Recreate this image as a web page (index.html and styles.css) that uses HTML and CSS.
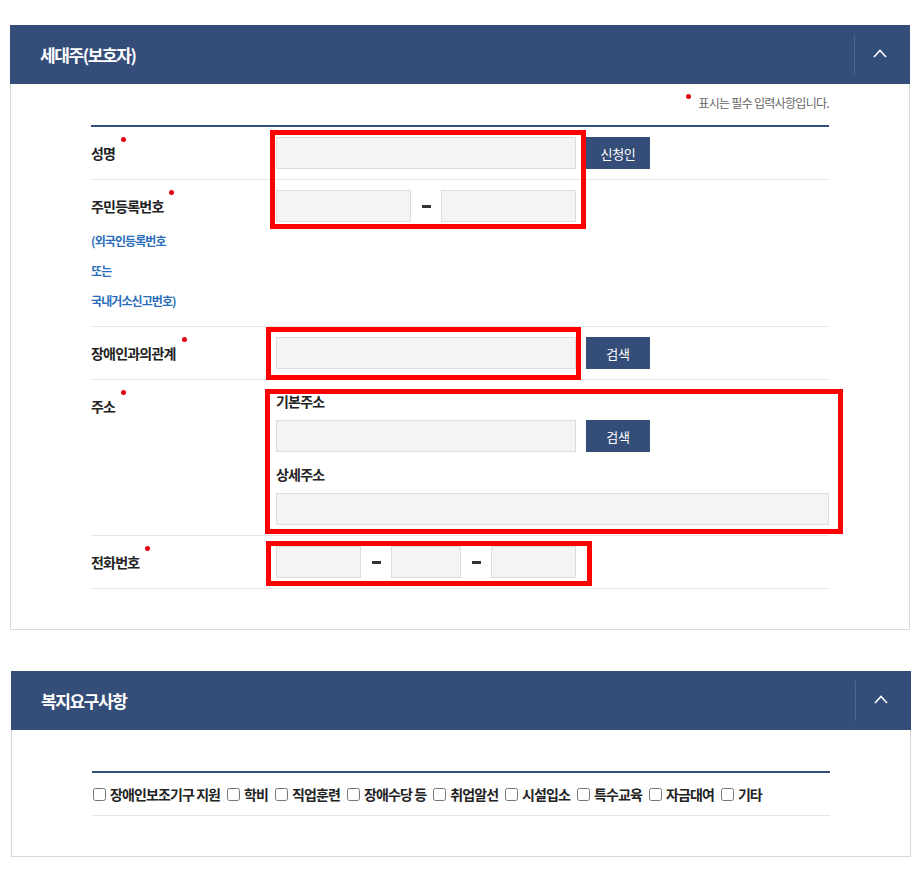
FILE: index.html
```html
<!DOCTYPE html>
<html>
<head>
  <title>세대주(보호자) 정보 입력</title>
  <link rel="stylesheet" href="styles.css">
</head>
<body>
  <div class="page">
    <div class="panel">
      <div class="panel-head">
        <h2 class="panel-title">세대주(보호자)</h2>
        <button type="button" class="toggle">
          <svg width="14" height="9" viewBox="0 0 14 9"><path d="M1 8 L7 1.5 L13 8" fill="none" stroke="#fff" stroke-width="1.6"/></svg>
        </button>
      </div>
      <div class="panel-body">
        <p class="note">표시는 필수 입력사항입니다.</p>
        <div class="form-table">
          <div class="form-row">
            <div class="label-cell"><span class="req">성명</span></div>
            <div class="field-cell">
              <div class="line">
                <input type="text" class="input w300">
                <button type="button" class="btn">신청인</button>
              </div>
            </div>
          </div>

          <div class="form-row">
            <div class="label-cell">
              <span class="req">주민등록번호</span>
              <div class="sub-note">
                <p>(외국인등록번호</p>
                <p>또는</p>
                <p>국내거소신고번호)</p>
              </div>
            </div>
            <div class="field-cell">
              <div class="line">
                <input type="text" class="input w135">
                <span class="dash"></span>
                <input type="text" class="input w135">
              </div>
            </div>
          </div>

          <div class="form-row">
            <div class="label-cell"><span class="req">장애인과의관계</span></div>
            <div class="field-cell">
              <div class="line">
                <input type="text" class="input w300">
                <button type="button" class="btn">검색</button>
              </div>
            </div>
          </div>

          <div class="form-row">
            <div class="label-cell"><span class="req">주소</span></div>
            <div class="field-cell">
              <p class="sub-label">기본주소</p>
              <div class="line">
                <input type="text" class="input w300">
                <button type="button" class="btn">검색</button>
              </div>
              <p class="sub-label second">상세주소</p>
              <input type="text" class="input full">
            </div>
          </div>

          <div class="form-row">
            <div class="label-cell"><span class="req">전화번호</span></div>
            <div class="field-cell">
              <div class="line">
                <input type="text" class="input w85">
                <span class="dash"></span>
                <input type="text" class="input w70">
                <span class="dash"></span>
                <input type="text" class="input w85">
              </div>
            </div>
          </div>
        </div>
      </div>
    </div>

    <div class="panel panel-second">
      <div class="panel-head">
        <h2 class="panel-title">복지요구사항</h2>
        <button type="button" class="toggle">
          <svg width="14" height="9" viewBox="0 0 14 9"><path d="M1 8 L7 1.5 L13 8" fill="none" stroke="#fff" stroke-width="1.6"/></svg>
        </button>
      </div>
      <div class="panel-body body-second">
        <div class="form-table">
          <div class="check-row">
            <label class="check"><input type="checkbox">장애인보조기구 지원</label>
            <label class="check"><input type="checkbox">학비</label>
            <label class="check"><input type="checkbox">직업훈련</label>
            <label class="check"><input type="checkbox">장애수당 등</label>
            <label class="check"><input type="checkbox">취업알선</label>
            <label class="check"><input type="checkbox">시설입소</label>
            <label class="check"><input type="checkbox">특수교육</label>
            <label class="check"><input type="checkbox">자금대여</label>
            <label class="check"><input type="checkbox">기타</label>
          </div>
        </div>
      </div>
    </div>

    <!-- red annotation boxes -->
    <div class="mark mark-1"></div>
    <div class="mark mark-2"></div>
    <div class="mark mark-3"></div>
    <div class="mark mark-4"></div>
  </div>
</body>
</html>
```

FILE: styles.css
```css
/* page */
body {
  margin: 0;
  font-family: "Noto Sans CJK KR", "Noto Sans", sans-serif;
  color: #222;
  background-color: #FFF;
}

p, h2 {
  margin: 0;
}

.page {
  position: relative;
  padding: 25px 0 0 10px;
}

/* panels */
.panel {
  width: 900px;
}

.panel-second {
  margin-top: 41px;
  margin-left: 1px;
}

.panel-head {
  display: flex;
  align-items: center;
  justify-content: space-between;
  height: 59px;
  padding-left: 30px;
  background-color: #344D79;
}

.panel-title {
  color: #FFF;
  font-size: 17px;
  font-weight: 700;
  letter-spacing: -1.4px;
}

.toggle {
  display: flex;
  align-items: center;
  justify-content: center;
  width: 56px;
  height: 40px;
  padding: 0 5px 3px 0;
  background: none;
  border: none;
  border-left: 1px solid rgba(255, 255, 255, 0.14);
}

.panel-body {
  padding: 10px 80px 40px;
  border: 1px solid #D9D9D9;
  border-top: none;
}

.body-second {
  padding-top: 41px;
}

.note {
  height: 18px;
  margin-bottom: 13px;
  line-height: 18px;
  text-align: right;
  font-size: 12px;
  color: #666;
  letter-spacing: -0.7px;
}

.note::before {
  content: "";
  display: inline-block;
  width: 5px;
  height: 5px;
  margin-right: 7px;
  border-radius: 50%;
  background-color: #E60012;
  vertical-align: 9px;
}

/* form table */
.form-table {
  border-top: 2px solid #344D79;
}

.form-row {
  display: grid;
  grid-template-columns: 185px 1fr;
  padding: 10px 0;
  border-bottom: 1px solid #E6E6E6;
}

.label-cell {
  font-size: 14px;
  font-weight: 700;
  letter-spacing: -0.8px;
  line-height: 32px;
}

.req {
  position: relative;
  display: inline-block;
}

.req::after {
  content: "";
  position: absolute;
  top: 0;
  right: -11px;
  width: 5px;
  height: 5px;
  border-radius: 50%;
  background-color: #E60012;
}

.sub-note {
  margin-top: 4px;
  font-size: 12px;
  line-height: 30px;
  color: #2A6EBB;
  letter-spacing: -0.9px;
}

.line {
  display: flex;
  align-items: center;
}

.input {
  height: 32px;
  padding: 0 8px;
  border: 1px solid #DDD;
  background-color: #F4F4F4;
  box-sizing: border-box;
}

.w300 { width: 300px; }
.w135 { width: 135px; }
.w85 { width: 85px; }
.w70 { width: 70px; }
.full { width: 100%; display: block; }

.dash {
  display: flex;
  justify-content: center;
  width: 30px;
}

.dash::after {
  content: "";
  width: 9px;
  height: 3px;
  background-color: #333;
}

.btn {
  width: 64px;
  height: 32px;
  margin-left: 10px;
  padding: 0;
  border: none;
  background-color: #344D79;
  color: #FFF;
  font-family: inherit;
  font-size: 13px;
  letter-spacing: -0.3px;
}

.sub-label {
  font-size: 14px;
  font-weight: 700;
  letter-spacing: -0.8px;
  line-height: 22px;
  margin-bottom: 8px;
}

.sub-label.second {
  margin-top: 11px;
}

/* checkboxes */
.check-row {
  display: flex;
  align-items: center;
  padding: 10px 0;
  border-bottom: 1px solid #E6E6E6;
  line-height: 22px;
}

.check {
  display: inline-flex;
  align-items: center;
  margin-right: 6px;
  font-size: 14px;
  font-weight: 700;
  letter-spacing: -0.9px;
}

.check input {
  width: 13px;
  height: 13px;
  margin: 1px 4px 0 1px;
}

/* annotations */
.mark {
  position: absolute;
  border: 5px solid #FF0000;
  box-sizing: border-box;
}

.mark-1 { left: 270px; top: 130px; width: 316px; height: 99px; }
.mark-2 { left: 266px; top: 327px; width: 315px; height: 53px; }
.mark-3 { left: 265px; top: 389px; width: 578px; height: 145px; }
.mark-4 { left: 266px; top: 541px; width: 326px; height: 45px; }
```
